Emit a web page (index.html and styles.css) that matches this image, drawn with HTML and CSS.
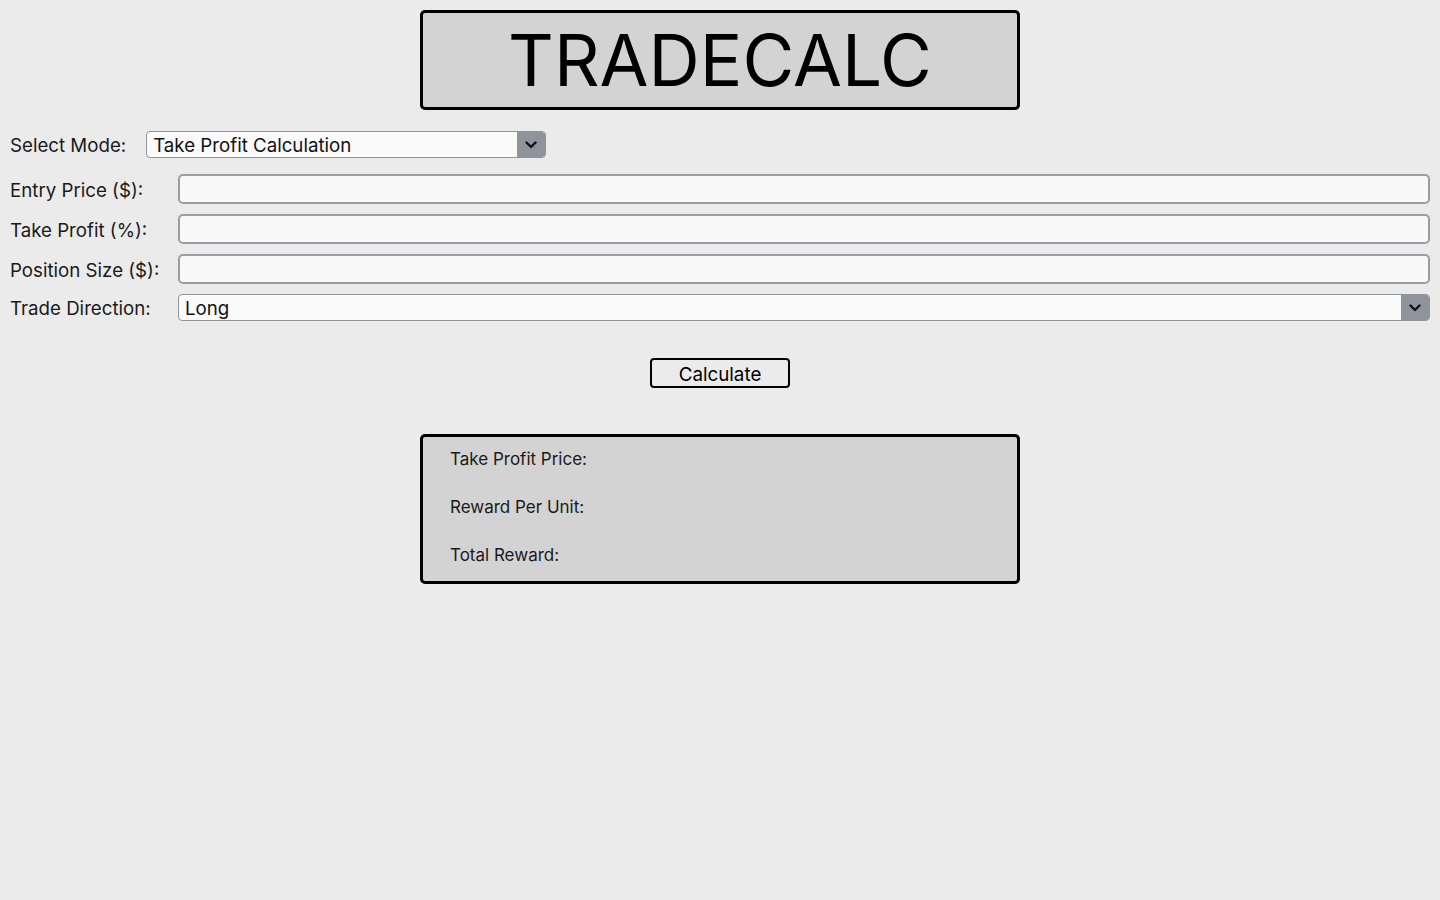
FILE: index.html
```html
<!DOCTYPE html>
<html>
<head>
    <title>TradeCalc</title>
    <link rel="stylesheet" href="styles.css">
</head>
<body>
    <h1 class="title">TRADECALC</h1>

    <!-- Mode selector -->
    <div class="mode-row">
        <label for="modeSelect">Select Mode:</label>
        <div class="select-wrap mode-select">
            <select id="modeSelect">
                <option>Take Profit Calculation</option>
                <option>Stop Loss Calculation</option>
            </select>
            <span class="select-arrow">
                <svg width="12" height="8" viewBox="0 0 12 8"><path d="M1.5 1.5 L6 6 L10.5 1.5" fill="none" stroke="#111" stroke-width="2.4" stroke-linecap="round" stroke-linejoin="round"/></svg>
            </span>
        </div>
    </div>

    <!-- Inputs -->
    <form class="calc-form">
        <label for="entryPrice">Entry Price ($):</label>
        <input type="text" id="entryPrice">
        <label for="takeProfit">Take Profit (%):</label>
        <input type="text" id="takeProfit">
        <label for="positionSize">Position Size ($):</label>
        <input type="text" id="positionSize">
        <label for="direction">Trade Direction:</label>
        <div class="select-wrap">
            <select id="direction">
                <option>Long</option>
                <option>Short</option>
            </select>
            <span class="select-arrow">
                <svg width="12" height="8" viewBox="0 0 12 8"><path d="M1.5 1.5 L6 6 L10.5 1.5" fill="none" stroke="#111" stroke-width="2.4" stroke-linecap="round" stroke-linejoin="round"/></svg>
            </span>
        </div>
    </form>

    <div class="actions">
        <button type="button" class="calc-btn">Calculate</button>
    </div>

    <!-- Results -->
    <div class="results">
        <p>Take Profit Price:</p>
        <p>Reward Per Unit:</p>
        <p>Total Reward:</p>
    </div>
</body>
</html>
```

FILE: styles.css
```css
body {
    font-family: Inter, "Noto Sans", sans-serif;
    background-color: #ebebeb;
    color: #1a1a1a;
    margin: 0;
    padding: 10px;
}
.title {
    width: 594px;
    height: 94px;
    margin: 0 auto;
    border: 3px solid #000;
    border-radius: 5px;
    background-color: #d3d3d3;
    font-size: 71px;
    font-weight: 400;
    color: #000;
    display: flex;
    align-items: center;
    justify-content: center;
}
.mode-row {
    display: flex;
    align-items: center;
    gap: 20px;
    margin-top: 21px;
    font-size: 18.7px;
}
.mode-row label {
    padding-top: 2px;
}
.select-wrap {
    position: relative;
    height: 27px;
    box-sizing: border-box;
    border: 1px solid #8f949a;
    border-radius: 4px;
    background-color: #fafafa;
    overflow: hidden;
}
.mode-select {
    width: 400px;
}
.select-wrap select {
    appearance: none;
    border: none;
    background: transparent;
    width: 100%;
    height: 100%;
    font-family: inherit;
    font-size: 18.7px;
    color: #111;
    padding: 1px 0 0 6px;
    outline: none;
}
.select-arrow {
    position: absolute;
    top: 0;
    right: 0;
    width: 28px;
    height: 100%;
    background-color: #8f949a;
    display: flex;
    align-items: center;
    justify-content: center;
    pointer-events: none;
}
.calc-form {
    display: grid;
    grid-template-columns: 148px 1fr;
    column-gap: 20px;
    row-gap: 10px;
    align-items: center;
    margin-top: 16px;
    font-size: 18.7px;
}
.calc-form label {
    padding-top: 2px;
    white-space: nowrap;
}
.calc-form input {
    height: 30px;
    box-sizing: border-box;
    border: 2px solid #9a9ea3;
    border-radius: 5px;
    background-color: #f9f9f9;
    font-family: inherit;
    font-size: 18px;
}
.actions {
    display: flex;
    justify-content: center;
    margin-top: 37px;
}
.calc-btn {
    width: 140px;
    height: 30px;
    border: 2px solid #000;
    border-radius: 4px;
    background-color: #ebebeb;
    font-family: inherit;
    font-size: 18.8px;
    color: #000;
    padding: 2px 0 0;
}
.results {
    box-sizing: content-box;
    margin: 46px auto 0;
    border: 3px solid #000;
    border-radius: 5px;
    background-color: #d3d3d3;
    padding: 9px 0 13px 27px;
    width: 567px;
    font-size: 17px;
}
.results p {
    margin: 0;
    height: 48px;
    line-height: 26px;
}
.results p:last-child {
    height: 26px;
}
```
